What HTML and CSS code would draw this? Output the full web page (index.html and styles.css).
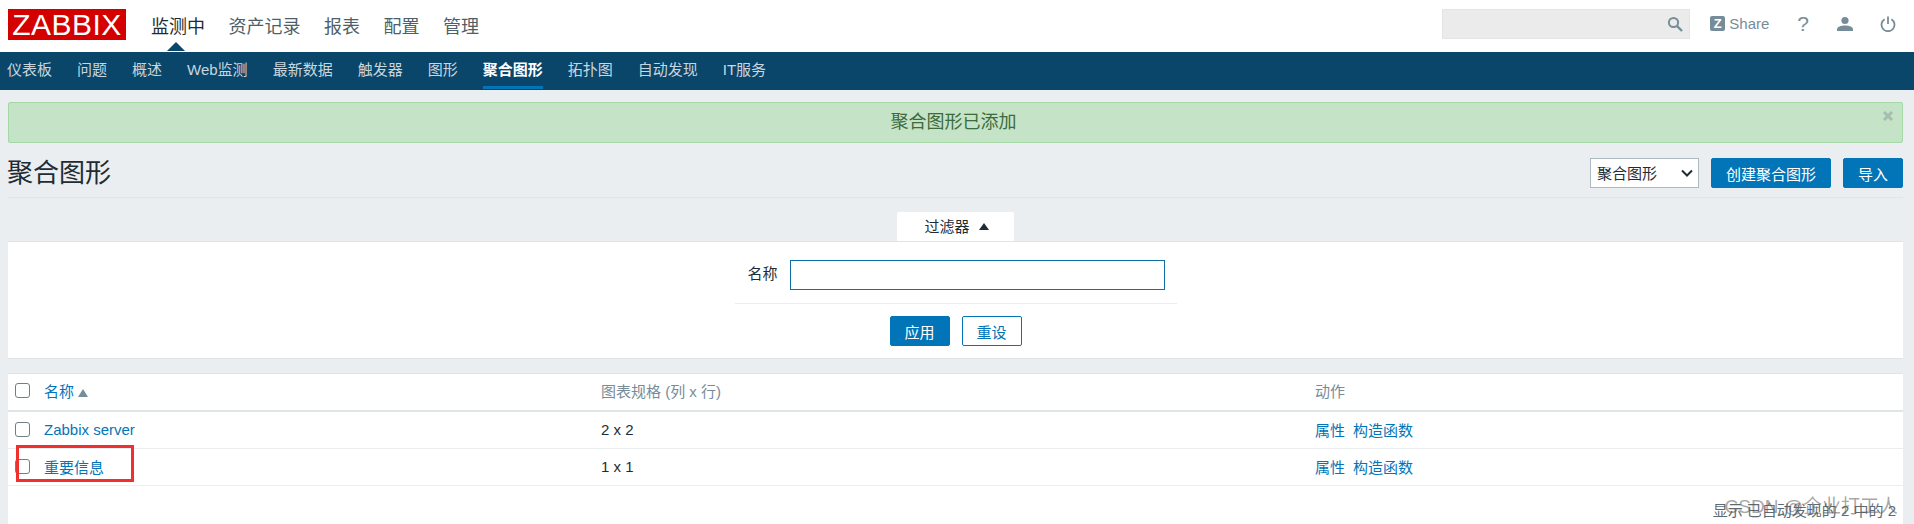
FILE: index.html
```html
<!DOCTYPE html>
<html lang="zh-CN">
<head>
  <meta charset="UTF-8" />
  <title>聚合图形</title>
  <link rel="stylesheet" href="styles.css">
</head>
<body>

  <header class="top-bar">
    <div class="logo">ZABBIX</div>
    <nav class="main-nav">
      <a class="active" href="#">监测中</a>
      <a href="#">资产记录</a>
      <a href="#">报表</a>
      <a href="#">配置</a>
      <a href="#">管理</a>
    </nav>
    <div class="top-tools">
      <div class="search-box">
        <svg viewBox="0 0 16 16" width="16" height="16"><circle cx="6.5" cy="6.5" r="4.6" fill="none" stroke="#768d99" stroke-width="2"/><path d="M10 10l5 5" stroke="#768d99" stroke-width="2.4"/></svg>
      </div>
      <a class="share" href="#"><span class="share-z">Z</span>Share</a>
      <span class="tool-help">?</span>
      <svg class="tool-user" viewBox="0 0 16 16" width="16" height="16"><circle cx="8" cy="4.5" r="3.6" fill="#768d99"/><path d="M0 15v-1.5C0 10.500 4 9.500 8 9.500s8 1 8 4V15z" fill="#768d99"/></svg>
      <svg class="tool-power" viewBox="0 0 16 16" width="16" height="16"><path d="M4.600 3.200a6.500 6.500 0 1 0 6.800 0" fill="none" stroke="#768d99" stroke-width="1.800"/><path d="M8 0.500v7.500" stroke="#768d99" stroke-width="1.800"/></svg>
    </div>
  </header>

  <nav class="sub-nav">
    <a href="#">仪表板</a>
    <a href="#">问题</a>
    <a href="#">概述</a>
    <a href="#">Web监测</a>
    <a href="#">最新数据</a>
    <a href="#">触发器</a>
    <a href="#">图形</a>
    <a class="active" href="#">聚合图形</a>
    <a href="#">拓扑图</a>
    <a href="#">自动发现</a>
    <a href="#">IT服务</a>
  </nav>

  <main class="page">
    <div class="msg-good">
      聚合图形已添加
      <svg class="msg-close" viewBox="0 0 10 10" width="10" height="10"><path d="M1 1l8 8M9 1l-8 8" stroke="#a5bdad" stroke-width="3"/></svg>
    </div>

    <div class="page-head">
      <h1>聚合图形</h1>
      <div class="head-controls">
        <div class="select-wrap">
          <select class="type-select"><option>聚合图形</option></select>
          <svg class="select-arrow" viewBox="0 0 12 8" width="12" height="8"><path d="M1 1.500l5 5 5-5" fill="none" stroke="#1f2c33" stroke-width="2"/></svg>
        </div>
        <button type="button" class="btn">创建聚合图形</button>
        <button type="button" class="btn btn-import">导入</button>
      </div>
    </div>

    <div class="filter-tabs">
      <div class="filter-tab">过滤器 <span class="tab-arrow"></span></div>
    </div>
    <section class="filter-box">
      <div class="filter-row">
        <label for="filterName">名称</label>
        <input type="text" id="filterName" />
      </div>
      <div class="filter-buttons">
        <button type="button" class="btn">应用</button>
        <button type="button" class="btn btn-alt">重设</button>
      </div>
    </section>

    <section class="list-box">
      <table class="list-table">
        <thead>
          <tr>
            <th class="col-check"><span class="check"></span></th>
            <th class="col-name"><a href="#">名称</a><span class="sort-arrow"></span></th>
            <th class="col-size">图表规格 (列 x 行)</th>
            <th>动作</th>
          </tr>
        </thead>
        <tbody>
          <tr>
            <td><span class="check"></span></td>
            <td><a href="#">Zabbix server</a></td>
            <td>2 x 2</td>
            <td class="actions"><a href="#">属性</a><a href="#">构造函数</a></td>
          </tr>
          <tr>
            <td><span class="check"></span></td>
            <td><a href="#">重要信息</a></td>
            <td>1 x 1</td>
            <td class="actions"><a href="#">属性</a><a href="#">构造函数</a></td>
          </tr>
        </tbody>
      </table>
      <div class="table-stats">显示 已自动发现的 2 中的 2</div>
    </section>
  </main>

  <!-- annotation and watermark sit on top of the screenshot -->
  <div class="red-mark"></div>
  <div class="watermark">CSDN @企业打工人</div>

</body>
</html>
```

FILE: styles.css
```css
* {
  box-sizing: border-box;
}

html, body {
  margin: 0;
  height: 524px;
  overflow: hidden;
}

body {
  position: relative;
  font-family: "Liberation Sans", "Noto Sans CJK SC", sans-serif;
  font-size: 15px;
  background: #ebeef0;
  color: #1f2c33;
}

a {
  text-decoration: none;
  color: #0275b8;
}

/* top bar */
.top-bar {
  height: 52px;
  background: #fff;
  display: flex;
  align-items: flex-start;
  padding-left: 8px;
}

.logo {
  width: 118px;
  height: 31px;
  margin-top: 9px;
  background: #d40000;
  color: #fff;
  font-size: 30px;
  line-height: 31px;
  text-align: center;
  letter-spacing: 0.5px;
}

.main-nav {
  display: flex;
  gap: 23.5px;
  margin-left: 25px;
  height: 52px;
  align-items: center;
  font-size: 18px;
}

.main-nav a {
  position: relative;
  color: #4f5f68;
  margin-top: -3px;
}

.main-nav a.active {
  color: #1f2c33;
}

.main-nav a.active::after {
  content: "";
  position: absolute;
  left: 16px;
  bottom: -13px;
  border-left: 9px solid transparent;
  border-right: 9px solid transparent;
  border-bottom: 9px solid #0a466a;
}

.top-tools {
  margin-left: auto;
  height: 52px;
  display: flex;
  align-items: flex-start;
  padding-right: 18px;
}

.search-box {
  width: 248px;
  height: 30px;
  margin-top: 9px;
  background: #ebebeb;
  border: 1px solid #e4e4e4;
  display: flex;
  align-items: center;
  justify-content: flex-end;
  padding-right: 6px;
}

.share {
  display: flex;
  align-items: center;
  margin: 16px 0 0 20px;
  color: #768d99;
  font-size: 15px;
  line-height: 15px;
}

.share-z {
  width: 15px;
  height: 15px;
  margin-right: 4px;
  background: #768d99;
  color: #fff;
  border-radius: 2px;
  font-weight: bold;
  font-size: 13px;
  text-align: center;
}

.tool-help {
  margin: 12px 0 0 28px;
  color: #768d99;
  font-size: 21px;
  line-height: 23px;
}

.tool-user {
  margin: 16px 0 0 28px;
}

.tool-power {
  margin: 16px 0 0 27px;
}

/* second level menu */
.sub-nav {
  height: 38px;
  background: #0a466a;
  display: flex;
  gap: 25px;
  padding-left: 7px;
  font-size: 15px;
}

.sub-nav a {
  color: #c8d6de;
  height: 37px;
  line-height: 36px;
}

.sub-nav a.active {
  color: #fff;
  font-weight: bold;
  border-bottom: 3px solid #0275b8;
}

/* page */
.page {
  padding: 12px 11px 0 8px;
}

.msg-good {
  position: relative;
  height: 41px;
  line-height: 38px;
  padding-right: 4px;
  text-align: center;
  font-size: 18px;
  background: #c5e3c7;
  border: 1px solid #a4d8a4;
  border-radius: 2px;
  color: #3c6b3c;
}

.msg-close {
  position: absolute;
  right: 9px;
  top: 8px;
}

.page-head {
  height: 55px;
  padding-top: 15px;
  display: flex;
  justify-content: space-between;
  border-bottom: 1px solid #dfe4e7;
}

.page-head h1 {
  margin: 0 0 0 -1px;
  font-size: 26px;
  font-weight: normal;
  line-height: 30px;
  color: #1f2c33;
}

.head-controls {
  display: flex;
  gap: 12px;
  height: 30px;
}

.select-wrap {
  position: relative;
  width: 109px;
  height: 30px;
}

.type-select {
  appearance: none;
  width: 109px;
  height: 30px;
  background: #fff;
  border: 1px solid #acbbc2;
  border-radius: 0;
  font: inherit;
  color: #1f2c33;
  padding-left: 6px;
}

.select-arrow {
  position: absolute;
  right: 6px;
  top: 11px;
}

.btn {
  height: 30px;
  padding: 0;
  background: #0275b8;
  border: 1px solid #0275b8;
  border-radius: 2px;
  color: #fff;
  font: inherit;
  width: 60px;
}

.head-controls .btn {
  width: 120px;
}

.head-controls .btn-import {
  width: 60px;
}

.btn-alt {
  background: #fff;
  color: #0275b8;
}

/* filter */
.filter-tabs {
  display: flex;
  justify-content: center;
  padding-top: 14px;
  margin-left: -1px;
}

.filter-tab {
  width: 117px;
  height: 29px;
  padding-left: 3px;
  background: #fff;
  border-radius: 2px 2px 0 0;
  text-align: center;
  line-height: 30px;
  font-size: 15px;
}

.tab-arrow {
  display: inline-block;
  margin-left: 5px;
  vertical-align: 2px;
  border-left: 5px solid transparent;
  border-right: 5px solid transparent;
  border-bottom: 7px solid #1f2c33;
}

.filter-box {
  height: 118px;
  background: #fff;
  border-top: 1px solid #dfe4e7;
  border-bottom: 1px solid #dfe4e7;
  display: flex;
  flex-direction: column;
  align-items: center;
  padding-top: 18px;
}

.filter-row {
  width: 442px;
  height: 44px;
  display: flex;
  justify-content: flex-end;
  padding-right: 12px;
  gap: 12px;
  border-bottom: 1px solid #ebeef0;
}

.filter-row label {
  line-height: 28px;
}

.filter-row input {
  width: 375px;
  height: 30px;
  border: 1px solid #0f6ea5;
  background: #fff;
}

.filter-buttons {
  display: flex;
  gap: 12px;
  padding-top: 12px;
}

/* list */
.list-box {
  margin-top: 14px;
  height: 160px;
  background: #fff;
  border-top: 1px solid #dfe4e7;
}

.list-table {
  width: 100%;
  border-collapse: collapse;
  table-layout: fixed;
}

.list-table th {
  height: 37px;
  padding: 0 0 3px;
  text-align: left;
  font-weight: normal;
  color: #768d99;
  border-bottom: 2px solid #dfe4e7;
}

.list-table td {
  height: 37px;
  padding: 0;
  border-bottom: 1px solid #ebeef0;
}

.col-check {
  width: 36px;
}

.col-name {
  width: 557px;
}

.col-size {
  width: 714px;
}

.check {
  display: block;
  width: 15px;
  height: 15px;
  margin-left: 7px;
  background: #fff;
  border: 1px solid #6f7f88;
  border-radius: 3px;
}

.sort-arrow {
  display: inline-block;
  margin-left: 4px;
  border-left: 5px solid transparent;
  border-right: 5px solid transparent;
  border-bottom: 8px solid #768d99;
}

.actions a {
  margin-right: 8px;
}

.table-stats {
  position: absolute;
  right: 18px;
  top: 499px;
  color: #5d6a72;
  font-size: 15px;
}

/* overlays */
.red-mark {
  position: absolute;
  left: 16px;
  top: 445px;
  width: 118px;
  height: 37px;
  border: 3px solid #f0302f;
}

.watermark {
  position: absolute;
  right: 16px;
  top: 491px;
  font-size: 19px;
  color: rgba(90, 90, 90, 0.55);
}
```
